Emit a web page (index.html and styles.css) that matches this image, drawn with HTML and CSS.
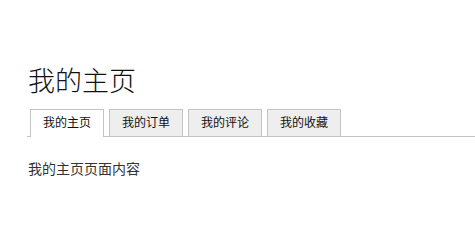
FILE: index.html
```html
<!DOCTYPE html>
<html lang="zh-CN">
<head>
<meta charset="utf-8">
<title>我的主页</title>
<link rel="stylesheet" href="styles.css">
</head>
<body>
<div class="page">
  <h1 class="title">我的主页</h1>
  <ul class="tabs">
    <li class="tab active">我的主页</li>
    <li class="tab">我的订单</li>
    <li class="tab">我的评论</li>
    <li class="tab">我的收藏</li>
  </ul>
  <div class="panel">我的主页页面内容</div>
</div>
</body>
</html>
```
FILE: styles.css
```css
html, body {
  margin: 0;
  padding: 0;
  background: #fff;
}
body {
  font-family: "Liberation Sans", "Noto Sans CJK SC", sans-serif;
  color: #333;
}
.page {
  padding: 66px 0 0 28px;
}
.title {
  margin: 0;
  font-size: 27px;
  font-weight: 300;
  line-height: 32px;
  color: #111;
}
.tabs {
  list-style: none;
  margin: 11px 0 0 -1px;
  padding: 0 0 0 3px;
  display: flex;
  gap: 5px;
  border-bottom: 1px solid #c4c4c4;
}
.tab {
  box-sizing: border-box;
  width: 74px;
  height: 27px;
  line-height: 26px;
  text-align: center;
  font-size: 12px;
  color: #111;
  background: #eee;
  border: 1px solid #c4c4c4;
  border-bottom: none;
}
.tab.active {
  background: #fff;
  height: 28px;
  margin-bottom: -1px;
}
.panel {
  margin-top: 22px;
  font-size: 14px;
  line-height: 20px;
  color: #333;
}
```
